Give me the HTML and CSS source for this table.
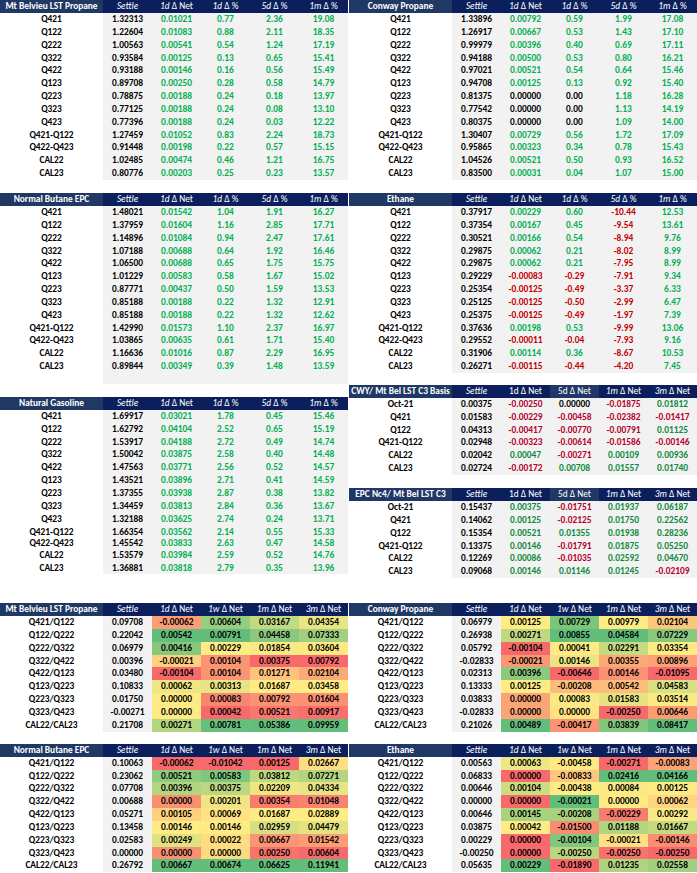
FILE: index.html
```html
<!DOCTYPE html>
<html>
<head>
<meta charset="utf-8">
<title>NGL Settlements</title>
<link rel="stylesheet" href="styles.css">
</head>
<body>
<div class="page">
  <section class="top">
    <div class="col">
      <table class="tbl grey signed">
        <colgroup><col class="c-label"><col class="c-num"><col class="c-num"><col class="c-num"><col class="c-num"><col class="c-num"></colgroup>
        <thead><tr><th class="h-label"><div class="clip">Mt Belvieu LST Propane</div></th><th><i>Settle</i></th><th><i>1d</i> Δ Net</th><th><i>1d</i> Δ %</th><th><i>5d</i> Δ %</th><th><i>1m</i> Δ %</th></tr></thead>
        <tbody>
          <tr><td>Q421</td><td>1.32313</td><td>0.01021</td><td>0.77</td><td>2.36</td><td>19.08</td></tr>
          <tr><td>Q122</td><td>1.22604</td><td>0.01083</td><td>0.88</td><td>2.11</td><td>18.35</td></tr>
          <tr><td>Q222</td><td>1.00563</td><td>0.00541</td><td>0.54</td><td>1.24</td><td>17.19</td></tr>
          <tr><td>Q322</td><td>0.93584</td><td>0.00125</td><td>0.13</td><td>0.65</td><td>15.41</td></tr>
          <tr><td>Q422</td><td>0.93188</td><td>0.00146</td><td>0.16</td><td>0.56</td><td>15.49</td></tr>
          <tr><td>Q123</td><td>0.89708</td><td>0.00250</td><td>0.28</td><td>0.58</td><td>14.79</td></tr>
          <tr><td>Q223</td><td>0.78875</td><td>0.00188</td><td>0.24</td><td>0.18</td><td>13.97</td></tr>
          <tr><td>Q323</td><td>0.77125</td><td>0.00188</td><td>0.24</td><td>0.08</td><td>13.10</td></tr>
          <tr><td>Q423</td><td>0.77396</td><td>0.00188</td><td>0.24</td><td>0.03</td><td>12.22</td></tr>
          <tr><td>Q421-Q122</td><td>1.27459</td><td>0.01052</td><td>0.83</td><td>2.24</td><td>18.73</td></tr>
          <tr><td>Q422-Q423</td><td>0.91448</td><td>0.00198</td><td>0.22</td><td>0.57</td><td>15.15</td></tr>
          <tr><td>CAL22</td><td>1.02485</td><td>0.00474</td><td>0.46</td><td>1.21</td><td>16.75</td></tr>
          <tr><td>CAL23</td><td>0.80776</td><td>0.00203</td><td>0.25</td><td>0.23</td><td>13.57</td></tr>
        </tbody>
      </table>

      <table class="tbl grey signed">
        <colgroup><col class="c-label"><col class="c-num"><col class="c-num"><col class="c-num"><col class="c-num"><col class="c-num"></colgroup>
        <thead><tr><th class="h-label"><div class="clip">Normal Butane EPC</div></th><th><i>Settle</i></th><th><i>1d</i> Δ Net</th><th><i>1d</i> Δ %</th><th><i>5d</i> Δ %</th><th><i>1m</i> Δ %</th></tr></thead>
        <tbody>
          <tr><td>Q421</td><td>1.48021</td><td>0.01542</td><td>1.04</td><td>1.91</td><td>16.27</td></tr>
          <tr><td>Q122</td><td>1.37959</td><td>0.01604</td><td>1.16</td><td>2.85</td><td>17.71</td></tr>
          <tr><td>Q222</td><td>1.14896</td><td>0.01084</td><td>0.94</td><td>2.47</td><td>17.61</td></tr>
          <tr><td>Q322</td><td>1.07188</td><td>0.00688</td><td>0.64</td><td>1.92</td><td>16.46</td></tr>
          <tr><td>Q422</td><td>1.06500</td><td>0.00688</td><td>0.65</td><td>1.75</td><td>15.75</td></tr>
          <tr><td>Q123</td><td>1.01229</td><td>0.00583</td><td>0.58</td><td>1.67</td><td>15.02</td></tr>
          <tr><td>Q223</td><td>0.87771</td><td>0.00437</td><td>0.50</td><td>1.59</td><td>13.53</td></tr>
          <tr><td>Q323</td><td>0.85188</td><td>0.00188</td><td>0.22</td><td>1.32</td><td>12.91</td></tr>
          <tr><td>Q423</td><td>0.85188</td><td>0.00188</td><td>0.22</td><td>1.32</td><td>12.62</td></tr>
          <tr><td>Q421-Q122</td><td>1.42990</td><td>0.01573</td><td>1.10</td><td>2.37</td><td>16.97</td></tr>
          <tr><td>Q422-Q423</td><td>1.03865</td><td>0.00635</td><td>0.61</td><td>1.71</td><td>15.40</td></tr>
          <tr><td>CAL22</td><td>1.16636</td><td>0.01016</td><td>0.87</td><td>2.29</td><td>16.95</td></tr>
          <tr><td>CAL23</td><td>0.89844</td><td>0.00349</td><td>0.39</td><td>1.48</td><td>13.59</td></tr>
          <tr class="blank"><td></td><td></td><td></td><td></td><td></td><td></td></tr>
        </tbody>
      </table>

      <table class="tbl grey signed">
        <colgroup><col class="c-label"><col class="c-num"><col class="c-num"><col class="c-num"><col class="c-num"><col class="c-num"></colgroup>
        <thead><tr><th class="h-label"><div class="clip">Natural Gasoline</div></th><th><i>Settle</i></th><th><i>1d</i> Δ Net</th><th><i>1d</i> Δ %</th><th><i>5d</i> Δ %</th><th><i>1m</i> Δ %</th></tr></thead>
        <tbody>
          <tr><td>Q421</td><td>1.69917</td><td>0.03021</td><td>1.78</td><td>0.45</td><td>15.46</td></tr>
          <tr><td>Q122</td><td>1.62792</td><td>0.04104</td><td>2.52</td><td>0.65</td><td>15.19</td></tr>
          <tr><td>Q222</td><td>1.53917</td><td>0.04188</td><td>2.72</td><td>0.49</td><td>14.74</td></tr>
          <tr><td>Q322</td><td>1.50042</td><td>0.03875</td><td>2.58</td><td>0.40</td><td>14.48</td></tr>
          <tr><td>Q422</td><td>1.47563</td><td>0.03771</td><td>2.56</td><td>0.52</td><td>14.57</td></tr>
          <tr><td>Q123</td><td>1.43521</td><td>0.03896</td><td>2.71</td><td>0.41</td><td>14.59</td></tr>
          <tr><td>Q223</td><td>1.37355</td><td>0.03938</td><td>2.87</td><td>0.38</td><td>13.82</td></tr>
          <tr><td>Q323</td><td>1.34459</td><td>0.03813</td><td>2.84</td><td>0.36</td><td>13.67</td></tr>
          <tr><td>Q423</td><td>1.32188</td><td>0.03625</td><td>2.74</td><td>0.24</td><td>13.71</td></tr>
          <tr><td>Q421-Q122</td><td>1.66354</td><td>0.03562</td><td>2.14</td><td>0.55</td><td>15.33</td></tr>
          <tr class="short"><td>Q422-Q423</td><td>1.45542</td><td>0.03833</td><td>2.63</td><td>0.47</td><td>14.58</td></tr>
          <tr class="short"><td>CAL22</td><td>1.53579</td><td>0.03984</td><td>2.59</td><td>0.52</td><td>14.76</td></tr>
          <tr><td>CAL23</td><td>1.36881</td><td>0.03818</td><td>2.79</td><td>0.35</td><td>13.96</td></tr>
        </tbody>
      </table>
    </div>

    <div class="col">
      <table class="tbl grey signed">
        <colgroup><col class="c-label"><col class="c-num"><col class="c-num"><col class="c-num"><col class="c-num"><col class="c-num"></colgroup>
        <thead><tr><th class="h-label"><div class="clip">Conway Propane</div></th><th><i>Settle</i></th><th><i>1d</i> Δ Net</th><th><i>1d</i> Δ %</th><th><i>5d</i> Δ %</th><th><i>1m</i> Δ %</th></tr></thead>
        <tbody>
          <tr><td>Q421</td><td>1.33896</td><td>0.00792</td><td>0.59</td><td>1.99</td><td>17.08</td></tr>
          <tr><td>Q122</td><td>1.26917</td><td>0.00667</td><td>0.53</td><td>1.43</td><td>17.10</td></tr>
          <tr><td>Q222</td><td>0.99979</td><td>0.00396</td><td>0.40</td><td>0.69</td><td>17.11</td></tr>
          <tr><td>Q322</td><td>0.94188</td><td>0.00500</td><td>0.53</td><td>0.80</td><td>16.21</td></tr>
          <tr><td>Q422</td><td>0.97021</td><td>0.00521</td><td>0.54</td><td>0.64</td><td>15.46</td></tr>
          <tr><td>Q123</td><td>0.94708</td><td>0.00125</td><td>0.13</td><td>0.92</td><td>15.40</td></tr>
          <tr><td>Q223</td><td>0.81375</td><td>0.00000</td><td>0.00</td><td>1.18</td><td>16.28</td></tr>
          <tr><td>Q323</td><td>0.77542</td><td>0.00000</td><td>0.00</td><td>1.13</td><td>14.19</td></tr>
          <tr><td>Q423</td><td>0.80375</td><td>0.00000</td><td>0.00</td><td>1.09</td><td>14.00</td></tr>
          <tr><td>Q421-Q122</td><td>1.30407</td><td>0.00729</td><td>0.56</td><td>1.72</td><td>17.09</td></tr>
          <tr><td>Q422-Q423</td><td>0.95865</td><td>0.00323</td><td>0.34</td><td>0.78</td><td>15.43</td></tr>
          <tr><td>CAL22</td><td>1.04526</td><td>0.00521</td><td>0.50</td><td>0.93</td><td>16.52</td></tr>
          <tr><td>CAL23</td><td>0.83500</td><td>0.00031</td><td>0.04</td><td>1.07</td><td>15.00</td></tr>
        </tbody>
      </table>

      <table class="tbl grey signed">
        <colgroup><col class="c-label"><col class="c-num"><col class="c-num"><col class="c-num"><col class="c-num"><col class="c-num"></colgroup>
        <thead><tr><th class="h-label"><div class="clip">Ethane</div></th><th><i>Settle</i></th><th><i>1d</i> Δ Net</th><th><i>1d</i> Δ %</th><th><i>5d</i> Δ %</th><th><i>1m</i> Δ %</th></tr></thead>
        <tbody>
          <tr><td>Q421</td><td>0.37917</td><td>0.00229</td><td>0.60</td><td>-10.44</td><td>12.53</td></tr>
          <tr><td>Q122</td><td>0.37354</td><td>0.00167</td><td>0.45</td><td>-9.54</td><td>13.61</td></tr>
          <tr><td>Q222</td><td>0.30521</td><td>0.00166</td><td>0.54</td><td>-8.94</td><td>9.76</td></tr>
          <tr><td>Q322</td><td>0.29875</td><td>0.00062</td><td>0.21</td><td>-8.02</td><td>8.99</td></tr>
          <tr><td>Q422</td><td>0.29875</td><td>0.00062</td><td>0.21</td><td>-7.95</td><td>8.99</td></tr>
          <tr><td>Q123</td><td>0.29229</td><td>-0.00083</td><td>-0.29</td><td>-7.91</td><td>9.34</td></tr>
          <tr><td>Q223</td><td>0.25354</td><td>-0.00125</td><td>-0.49</td><td>-3.37</td><td>6.33</td></tr>
          <tr><td>Q323</td><td>0.25125</td><td>-0.00125</td><td>-0.50</td><td>-2.99</td><td>6.47</td></tr>
          <tr><td>Q423</td><td>0.25375</td><td>-0.00125</td><td>-0.49</td><td>-1.97</td><td>7.39</td></tr>
          <tr><td>Q421-Q122</td><td>0.37636</td><td>0.00198</td><td>0.53</td><td>-9.99</td><td>13.06</td></tr>
          <tr><td>Q422-Q423</td><td>0.29552</td><td>-0.00011</td><td>-0.04</td><td>-7.93</td><td>9.16</td></tr>
          <tr><td>CAL22</td><td>0.31906</td><td>0.00114</td><td>0.36</td><td>-8.67</td><td>10.53</td></tr>
          <tr><td>CAL23</td><td>0.26271</td><td>-0.00115</td><td>-0.44</td><td>-4.20</td><td>7.45</td></tr>
        </tbody>
      </table>

      <table class="tbl grey signed dark basis">
        <colgroup><col class="c-label"><col class="c-num"><col class="c-num"><col class="c-num"><col class="c-num"><col class="c-num"></colgroup>
        <thead><tr><th class="h-label"><div class="clip">CWY/ Mt Bel LST C3 Basis</div></th><th><i>Settle</i></th><th>1d Δ Net</th><th class="h-alt">5d Δ Net</th><th><i>1m</i> Δ Net</th><th><i>3m</i> Δ Net</th></tr></thead>
        <tbody>
          <tr><td>Oct-21</td><td>0.00375</td><td>-0.00250</td><td>0.00000</td><td>-0.01875</td><td>0.01812</td></tr>
          <tr><td>Q421</td><td>0.01583</td><td>-0.00229</td><td>-0.00458</td><td>-0.02382</td><td>-0.01417</td></tr>
          <tr><td>Q122</td><td>0.04313</td><td>-0.00417</td><td>-0.00770</td><td>-0.00791</td><td>0.01125</td></tr>
          <tr><td>Q421-Q122</td><td>0.02948</td><td>-0.00323</td><td>-0.00614</td><td>-0.01586</td><td>-0.00146</td></tr>
          <tr><td>CAL22</td><td>0.02042</td><td>0.00047</td><td>-0.00271</td><td>0.00109</td><td>0.00936</td></tr>
          <tr><td>CAL23</td><td>0.02724</td><td>-0.00172</td><td>0.00708</td><td>0.01557</td><td>0.01740</td></tr>
        </tbody>
      </table>

      <table class="tbl grey signed dark basis">
        <colgroup><col class="c-label"><col class="c-num"><col class="c-num"><col class="c-num"><col class="c-num"><col class="c-num"></colgroup>
        <thead><tr><th class="h-label"><div class="clip">EPC Nc4/ Mt Bel LST C3</div></th><th><i>Settle</i></th><th>1d Δ Net</th><th class="h-alt">5d Δ Net</th><th><i>1m</i> Δ Net</th><th><i>3m</i> Δ Net</th></tr></thead>
        <tbody>
          <tr><td>Oct-21</td><td>0.15437</td><td>0.00375</td><td>-0.01751</td><td>0.01937</td><td>0.06187</td></tr>
          <tr><td>Q421</td><td>0.14062</td><td>0.00125</td><td>-0.02125</td><td>0.01750</td><td>0.22562</td></tr>
          <tr><td>Q122</td><td>0.15354</td><td>0.00521</td><td>0.01355</td><td>0.01938</td><td>0.28236</td></tr>
          <tr><td>Q421-Q122</td><td>0.13375</td><td>0.00146</td><td>-0.01791</td><td>0.01875</td><td>0.05250</td></tr>
          <tr><td>CAL22</td><td>0.12269</td><td>0.00086</td><td>-0.01035</td><td>0.02592</td><td>0.04670</td></tr>
          <tr><td>CAL23</td><td>0.09068</td><td>0.00146</td><td>0.01146</td><td>0.01245</td><td>-0.02109</td></tr>
        </tbody>
      </table>
    </div>
  </section>

  <section class="bottom">
    <div class="col">
      <table class="tbl heat">
        <colgroup><col class="c-label"><col class="c-num"><col class="c-num"><col class="c-num"><col class="c-num"><col class="c-num"></colgroup>
        <thead><tr><th class="h-label"><div class="clip">Mt Belvieu LST Propane</div></th><th><i>Settle</i></th><th><i>1d</i> Δ Net</th><th><i>1w</i> Δ Net</th><th><i>1m</i> Δ Net</th><th><i>3m</i> Δ Net</th></tr></thead>
        <tbody>
          <tr><td>Q421/Q122</td><td>0.09708</td><td>-0.00062</td><td>0.00604</td><td>0.03167</td><td>0.04354</td></tr>
          <tr><td>Q122/Q222</td><td>0.22042</td><td>0.00542</td><td>0.00791</td><td>0.04458</td><td>0.07333</td></tr>
          <tr><td>Q222/Q322</td><td>0.06979</td><td>0.00416</td><td>0.00229</td><td>0.01854</td><td>0.03604</td></tr>
          <tr><td>Q322/Q422</td><td>0.00396</td><td>-0.00021</td><td>0.00104</td><td>0.00375</td><td>0.00792</td></tr>
          <tr><td>Q422/Q123</td><td>0.03480</td><td>-0.00104</td><td>0.00104</td><td>0.01271</td><td>0.02104</td></tr>
          <tr><td>Q123/Q223</td><td>0.10833</td><td>0.00062</td><td>0.00313</td><td>0.01687</td><td>0.03458</td></tr>
          <tr><td>Q223/Q323</td><td>0.01750</td><td>0.00000</td><td>0.00083</td><td>0.00792</td><td>0.01604</td></tr>
          <tr><td>Q323/Q423</td><td>-0.00271</td><td>0.00000</td><td>0.00042</td><td>0.00521</td><td>0.00917</td></tr>
          <tr><td>CAL22/CAL23</td><td>0.21708</td><td>0.00271</td><td>0.00781</td><td>0.05386</td><td>0.09959</td></tr>
        </tbody>
      </table>

      <table class="tbl heat">
        <colgroup><col class="c-label"><col class="c-num"><col class="c-num"><col class="c-num"><col class="c-num"><col class="c-num"></colgroup>
        <thead><tr><th class="h-label"><div class="clip">Normal Butane EPC</div></th><th><i>Settle</i></th><th><i>1d</i> Δ Net</th><th><i>1w</i> Δ Net</th><th><i>1m</i> Δ Net</th><th><i>3m</i> Δ Net</th></tr></thead>
        <tbody>
          <tr><td>Q421/Q122</td><td>0.10063</td><td>-0.00062</td><td>-0.01042</td><td>0.00125</td><td>0.02667</td></tr>
          <tr><td>Q122/Q222</td><td>0.23062</td><td>0.00521</td><td>0.00583</td><td>0.03812</td><td>0.07271</td></tr>
          <tr><td>Q222/Q322</td><td>0.07708</td><td>0.00396</td><td>0.00375</td><td>0.02209</td><td>0.04334</td></tr>
          <tr><td>Q322/Q422</td><td>0.00688</td><td>0.00000</td><td>0.00201</td><td>0.00354</td><td>0.01048</td></tr>
          <tr><td>Q422/Q123</td><td>0.05271</td><td>0.00105</td><td>0.00069</td><td>0.01687</td><td>0.02889</td></tr>
          <tr><td>Q123/Q223</td><td>0.13458</td><td>0.00146</td><td>0.00146</td><td>0.02959</td><td>0.04479</td></tr>
          <tr><td>Q223/Q323</td><td>0.02583</td><td>0.00249</td><td>0.00022</td><td>0.00667</td><td>0.01542</td></tr>
          <tr><td>Q323/Q423</td><td>0.00000</td><td>0.00000</td><td>0.00000</td><td>0.00250</td><td>0.00604</td></tr>
          <tr><td>CAL22/CAL23</td><td>0.26792</td><td>0.00667</td><td>0.00674</td><td>0.06625</td><td>0.11941</td></tr>
        </tbody>
      </table>
    </div>

    <div class="col">
      <table class="tbl heat">
        <colgroup><col class="c-label"><col class="c-num"><col class="c-num"><col class="c-num"><col class="c-num"><col class="c-num"></colgroup>
        <thead><tr><th class="h-label"><div class="clip">Conway Propane</div></th><th><i>Settle</i></th><th><i>1d</i> Δ Net</th><th><i>1w</i> Δ Net</th><th><i>1m</i> Δ Net</th><th><i>3m</i> Δ Net</th></tr></thead>
        <tbody>
          <tr><td>Q421/Q122</td><td>0.06979</td><td>0.00125</td><td>0.00729</td><td>0.00979</td><td>0.02104</td></tr>
          <tr><td>Q122/Q222</td><td>0.26938</td><td>0.00271</td><td>0.00855</td><td>0.04584</td><td>0.07229</td></tr>
          <tr><td>Q222/Q322</td><td>0.05792</td><td>-0.00104</td><td>0.00041</td><td>0.02291</td><td>0.03354</td></tr>
          <tr><td>Q322/Q422</td><td>-0.02833</td><td>-0.00021</td><td>0.00146</td><td>0.00355</td><td>0.00896</td></tr>
          <tr><td>Q422/Q123</td><td>0.02313</td><td>0.00396</td><td>-0.00646</td><td>0.00146</td><td>-0.01095</td></tr>
          <tr><td>Q123/Q223</td><td>0.13333</td><td>0.00125</td><td>-0.00208</td><td>0.00542</td><td>0.04583</td></tr>
          <tr><td>Q223/Q323</td><td>0.03833</td><td>0.00000</td><td>0.00083</td><td>0.01583</td><td>0.03514</td></tr>
          <tr><td>Q323/Q423</td><td>-0.02833</td><td>0.00000</td><td>0.00000</td><td>-0.00250</td><td>0.00646</td></tr>
          <tr><td>CAL22/CAL23</td><td>0.21026</td><td>0.00489</td><td>-0.00417</td><td>0.03839</td><td>0.08417</td></tr>
        </tbody>
      </table>

      <table class="tbl heat">
        <colgroup><col class="c-label"><col class="c-num"><col class="c-num"><col class="c-num"><col class="c-num"><col class="c-num"></colgroup>
        <thead><tr><th class="h-label"><div class="clip">Ethane</div></th><th><i>Settle</i></th><th><i>1d</i> Δ Net</th><th><i>1w</i> Δ Net</th><th><i>1m</i> Δ Net</th><th><i>3m</i> Δ Net</th></tr></thead>
        <tbody>
          <tr><td>Q421/Q122</td><td>0.00563</td><td>0.00063</td><td>-0.00458</td><td>-0.00271</td><td>-0.00083</td></tr>
          <tr><td>Q122/Q222</td><td>0.06833</td><td>0.00000</td><td>-0.00833</td><td>0.02416</td><td>0.04166</td></tr>
          <tr><td>Q222/Q322</td><td>0.00646</td><td>0.00104</td><td>-0.00438</td><td>0.00084</td><td>0.00125</td></tr>
          <tr><td>Q322/Q422</td><td>0.00000</td><td>0.00000</td><td>-0.00021</td><td>0.00000</td><td>0.00062</td></tr>
          <tr><td>Q422/Q123</td><td>0.00646</td><td>0.00145</td><td>-0.00208</td><td>-0.00229</td><td>0.00292</td></tr>
          <tr><td>Q123/Q223</td><td>0.03875</td><td>0.00042</td><td>-0.01500</td><td>0.01188</td><td>0.01667</td></tr>
          <tr><td>Q223/Q323</td><td>0.00229</td><td>0.00000</td><td>-0.00104</td><td>-0.00021</td><td>-0.00146</td></tr>
          <tr><td>Q323/Q423</td><td>-0.00250</td><td>0.00000</td><td>-0.00250</td><td>-0.00250</td><td>-0.00250</td></tr>
          <tr><td>CAL22/CAL23</td><td>0.05635</td><td>0.00229</td><td>-0.01890</td><td>0.01235</td><td>0.02558</td></tr>
        </tbody>
      </table>
    </div>
  </section>
</div>
<script src="script.js"></script>
</body>
</html>
```

FILE: styles.css
```css
html, body {
  margin: 0;
  padding: 0;
  background: #ffffff;
}

body {
  font-family: Carlito, Calibri, Lato, "Liberation Sans", sans-serif;
  font-size: 9.4px;
  color: #000000;
}

.page {
  width: 697px;
}

.top,
.bottom {
  display: grid;
  grid-template-columns: 348px 348px;
  column-gap: 1px;
  align-items: start;
}

.bottom {
  margin-top: 25px;
}

.col {
  display: flex;
  flex-direction: column;
}

.top .col:first-child {
  gap: 13px;
}

.top .col:last-child .tbl:nth-child(2) {
  margin-top: 13px;
}

.top .col:last-child .tbl:nth-child(3) {
  margin-top: 12px;
}

.top .col:last-child .tbl:nth-child(4) {
  margin-top: 13px;
}

.bottom .col {
  gap: 12px;
}

.tbl {
  width: 348px;
  border-collapse: collapse;
  border-spacing: 0;
  table-layout: fixed;
}

.c-label { width: 103px; }
.c-num { width: 49px; }

.tbl th,
.tbl td {
  padding: 0;
  text-align: center;
  white-space: nowrap;
  overflow: hidden;
  vertical-align: middle;
}

.tbl th {
  height: 13px;
  line-height: 13px;
  background: #0a1f5c;
  color: #ffffff;
  font-weight: 400;
}

.tbl th i {
  font-style: italic;
}

.tbl th.h-label,
.tbl th.h-alt {
  background: #1f3864;
}

.tbl th.h-label {
  font-weight: 700;
}

.clip {
  display: flex;
  justify-content: center;
  overflow: hidden;
  white-space: nowrap;
  width: 100%;
}

.tbl td {
  height: 12.85px;
  line-height: 12.85px;
  font-weight: 700;
  background: #ffffff;
}

.tbl tr.short td {
  height: 11.6px;
  line-height: 11.6px;
}

.tbl tr.blank td {
  height: 11px;
}

.grey td:not(:first-child) {
  background: #f2f2f2;
}

.heat td:nth-child(2) {
  background: #f2f2f2;
}

.pos { color: #00b050; }
.neg { color: #c00000; }

.dark .pos { color: #0e8a3c; }
.dark .neg { color: #b4002a; }
```

FILE: script.js
```js
(function () {
  // Text colour by sign for delta columns (Excel style formatting)
  document.querySelectorAll('table.signed tbody tr').forEach(function (row) {
    for (var c = 2; c < row.cells.length; c++) {
      var cell = row.cells[c];
      var txt = cell.textContent.trim();
      if (!txt) continue;
      var v = parseFloat(txt);
      if (v > 0) cell.classList.add('pos');
      else if (v < 0) cell.classList.add('neg');
    }
  });

  // 3-colour scale (red / yellow / green), per column, midpoint = 50th percentile
  var LO = [248, 105, 107], MID = [255, 235, 132], HI = [99, 190, 123];
  function mix(a, b, f) {
    f = Math.max(0, Math.min(1, f));
    return [0, 1, 2].map(function (i) { return Math.round(a[i] + (b[i] - a[i]) * f); });
  }
  document.querySelectorAll('table.heat').forEach(function (t) {
    var rows = Array.prototype.slice.call(t.tBodies[0].rows);
    var n = rows[0].cells.length;
    for (var c = 2; c < n; c++) {
      var vals = rows.map(function (r) { return parseFloat(r.cells[c].textContent); });
      var s = vals.slice().sort(function (a, b) { return a - b; });
      var min = s[0], max = s[s.length - 1];
      var p = (s.length - 1) * 0.5, lo = Math.floor(p), hi = Math.ceil(p);
      var mid = s[lo] + (s[hi] - s[lo]) * (p - lo);
      rows.forEach(function (r, i) {
        var v = vals[i], col;
        if (v <= mid) col = mix(LO, MID, mid === min ? 1 : (v - min) / (mid - min));
        else col = mix(MID, HI, max === mid ? 1 : (v - mid) / (max - mid));
        r.cells[c].style.backgroundColor = 'rgb(' + col.join(',') + ')';
      });
    }
  });
})();
```
